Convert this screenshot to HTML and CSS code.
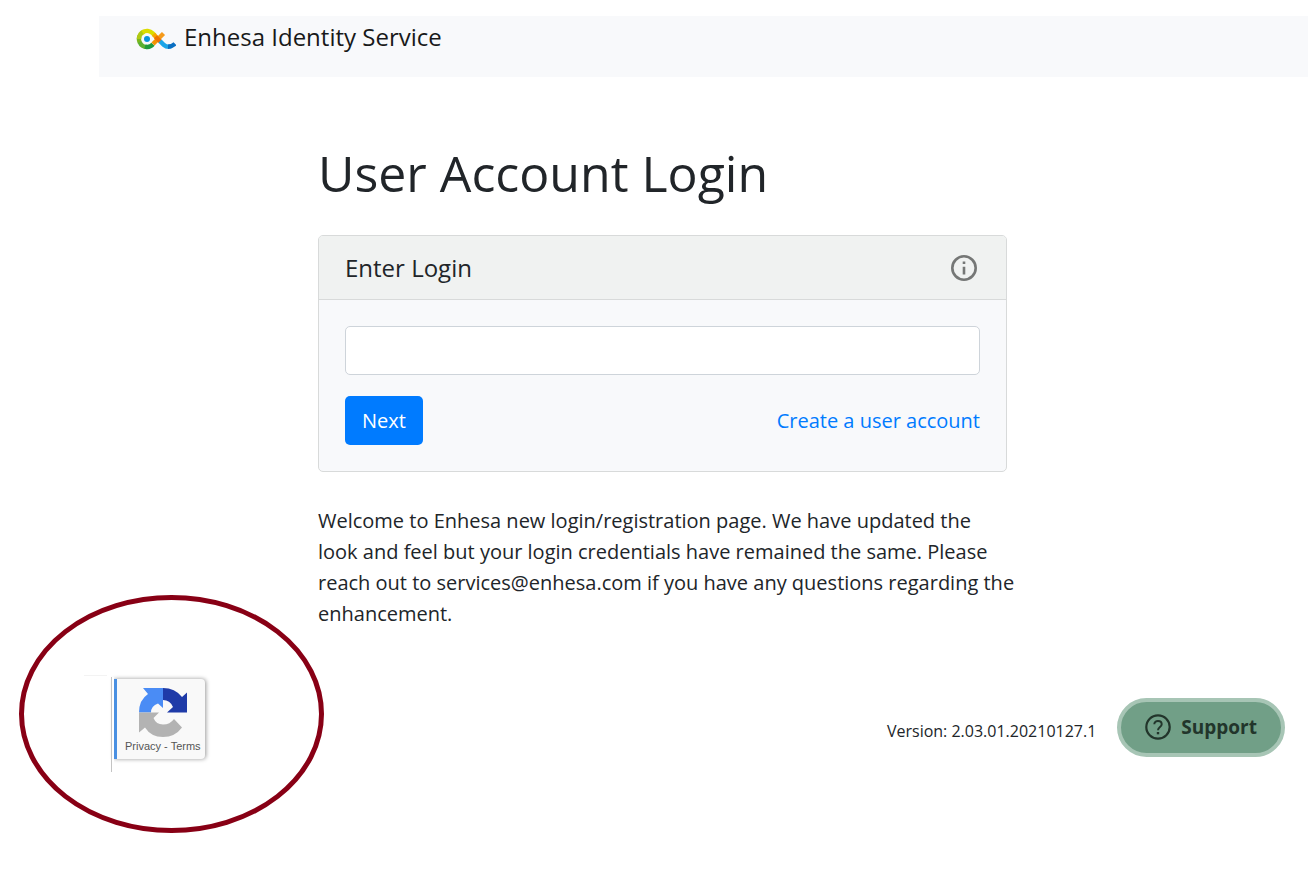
FILE: index.html
```html
<!DOCTYPE html>
<html lang="en">
<head>
  <meta charset="UTF-8">
  <meta name="viewport" content="width=device-width, initial-scale=1">
  <title>Enhesa Identity Service</title>
  <link rel="stylesheet" href="styles.css">
</head>
<body>

<header class="navbar">
  <a class="brand" href="#">
    <svg class="brand-logo" width="40" height="26" viewBox="0 -4 40 26" fill="none" stroke-width="4.4">
      <path d="M3.800 14.500A8 8 0 0 1 3.500 8" stroke="#7ab61d"/>
      <path d="M3 11A8 8 0 0 1 8 3.600" stroke="#b0c914"/>
      <path d="M6.500 4.400A8 8 0 0 1 16.700 5.300L19 7.700" stroke="#dcdc00"/>
      <path d="M3.600 14A8 8 0 0 0 11 19" stroke="#5cb030"/>
      <path d="M9 18.700A8 8 0 0 0 17 16.300" stroke="#1f9a3c"/>
      <path d="M22 11L27.500 5.500" stroke="#f59a1b"/>
      <path d="M17.500 6.200L21 10" stroke="#f7a600"/>
      <path d="M17 16L22 11" stroke="#f39200"/>
      <path d="M19.500 8.700L24.500 13.700" stroke="#ee7203"/>
      <path d="M24 13.200L28 17Q31 19.500 35 18.300" stroke="#1ba5e8"/>
      <path d="M32 18.700Q36 18.700 39 15.800" stroke="#0a6fc2"/>
      <circle cx="11" cy="11" r="3" fill="#0a94dc"/>
    </svg>
    <span>Enhesa Identity Service</span>
  </a>
</header>

<main class="content">
  <h1>User Account Login</h1>

  <form class="card">
    <div class="card-header">
      <label for="login">Enter Login</label>
      <button class="info-btn" type="button" aria-label="Information">
        <svg width="26" height="26" viewBox="0 0 26 26">
          <circle cx="13" cy="13" r="11.700" fill="none" stroke="#757776" stroke-width="2.600"/>
          <path d="M11.700 6.500h2.600v2.600h-2.600zM11.700 11.800h2.600v7.700h-2.600z" fill="#757776"/>
        </svg>
      </button>
    </div>
    <div class="card-body">
      <input id="login" class="login-input" type="text">
      <div class="actions">
        <button class="next-btn" type="submit">Next</button>
        <a href="#">Create a user account</a>
      </div>
    </div>
  </form>

  <p class="welcome">
    Welcome to Enhesa new login/registration page. We have updated the<br>
    look and feel but your login credentials have remained the same. Please<br>
    reach out to services@enhesa.com if you have any questions regarding the<br>
    enhancement.
  </p>
</main>

<footer class="footer">
  <div class="captcha-wrap">
    <div class="captcha">
      <svg width="48" height="49" viewBox="0 0 48 49">
        <path d="M4 0H24V20L19 15.500Q12 18 12 24.500H0Q0 12 9 6Z" fill="#4a8cf5"/>
        <path d="M24 0Q36 0 43 9L48 4.500V24.500H28L34 19Q31 12 24 12Z" fill="#1f3ba8"/>
        <path d="M0 24.500H20L14.500 30Q17 36.500 24 36.500Q31 36.500 35 31L43 39.500Q36 49 24 49Q12 49 6 39.500L0 44.500Z" fill="#b3b3b3"/>
      </svg>
      <div class="captcha-links"><a href="#">Privacy</a> - <a href="#">Terms</a></div>
    </div>
    <svg class="ring" viewBox="0 0 305 238" fill="none">
      <ellipse cx="152.500" cy="119" rx="150" ry="116.500" stroke="#880015" stroke-width="5"/>
    </svg>
  </div>

  <div class="footer-right">
    <span class="version">Version: 2.03.01.20210127.1</span>
    <button class="support-btn" type="button">
      <svg width="26" height="26" viewBox="0 0 26 26" fill="none" stroke="#22352b">
        <circle cx="13" cy="13" r="11.700" stroke-width="2.200"/>
        <path d="M9.300 10.300C9.300 5.700 16.700 5.800 16.700 10.300C16.700 13 13 13 13 16.200" stroke-width="2"/>
        <path d="M13 18v2.300" stroke-width="2.400"/>
      </svg>
      <span>Support</span>
    </button>
  </div>
</footer>

</body>
</html>
```

FILE: styles.css
```css
* {
  box-sizing: border-box;
}

body {
  min-height: 100vh;
  margin: 0;
  padding-top: 16px;
  background: #fff;
  color: #212529;
  font-family: "Segoe UI", "Open Sans", "Noto Sans", sans-serif;
  font-size: 20px;
  line-height: 31px;
}

a {
  color: #007bff;
  text-decoration: none;
}

button {
  font-family: inherit;
  cursor: pointer;
}

.navbar {
  margin-left: 99px;
  padding: 5px 37px 25px;
  background: #f8f9fb;
}

.brand {
  display: flex;
  align-items: center;
  gap: 8px;
  color: #18191a;
  font-size: 24px;
}

.content {
  padding: 65px 301px 0 318px;
}

h1 {
  margin: 0 0 31px;
  font-size: 50px;
  font-weight: 400;
  line-height: 62px;
}

.card {
  border: 1px solid #d8dada;
  border-radius: 5px;
  background: #f8f9fb;
}

.card-header {
  display: flex;
  justify-content: space-between;
  align-items: center;
  padding: 16px 29px 16px 26px;
  border-bottom: 1px solid #d8dada;
  border-radius: 4px 4px 0 0;
  background: #f0f2f1;
  font-size: 24px;
}

.info-btn {
  display: flex;
  padding: 0;
  border: 0;
  background: none;
}

.card-body {
  padding: 26px;
}

.login-input {
  display: block;
  width: 100%;
  height: 49px;
  padding: 8px 16px;
  border: 1px solid #ced4da;
  border-radius: 5px;
  background: #fff;
  font: inherit;
}

.actions {
  display: flex;
  justify-content: space-between;
  align-items: center;
  margin-top: 21px;
}

.next-btn {
  padding: 9px 17px;
  border: 0;
  border-radius: 5px;
  background: #007bff;
  color: #fff;
  font-size: 20px;
  line-height: 31px;
}

.welcome {
  margin: 33px -16px 50px 0;
}

.footer {
  display: flex;
  justify-content: space-between;
  align-items: center;
  padding: 0 23px 112px 113px;
}

.captcha-wrap {
  position: relative;
}

.captcha {
  display: flex;
  flex-direction: column;
  align-items: center;
  padding: 9px 4px 4px 8px;
  border-left: 4px solid #4a90e2;
  border-radius: 0 4px 4px 0;
  background: #f9f9f9;
  box-shadow: 1px 0 4px #999;
}

.captcha-links {
  color: #555;
  font-family: "Liberation Sans", Arial, sans-serif;
  font-size: 11px;
  line-height: 18px;
  white-space: nowrap;
}

.captcha-links a {
  color: inherit;
}

/* thin edges to the left of the badge */
.captcha-wrap::before {
  content: "";
  position: absolute;
  left: -2px;
  top: -2px;
  width: 2px;
  height: 95px;
  border-left: 1px solid #c4c4c4;
  background: #fff;
}

.captcha-wrap::after {
  content: "";
  position: absolute;
  left: -29px;
  top: -4px;
  width: 23px;
  height: 1px;
  background: #f3f3f3;
}

.ring {
  position: absolute;
  left: -94px;
  top: -84px;
  width: 305px;
  height: 238px;
  pointer-events: none;
}

.footer-right {
  display: flex;
  align-items: center;
  gap: 21px;
  padding-top: 16px;
}

.version {
  padding-top: 8px;
  font-size: 16px;
}

.support-btn {
  display: flex;
  align-items: center;
  gap: 10px;
  padding: 10px 24px;
  border: 4px solid #a7c5b5;
  border-radius: 30px;
  background: #719f87;
  color: #22352b;
  font-size: 19px;
  font-weight: 700;
  line-height: 31px;
}
```
